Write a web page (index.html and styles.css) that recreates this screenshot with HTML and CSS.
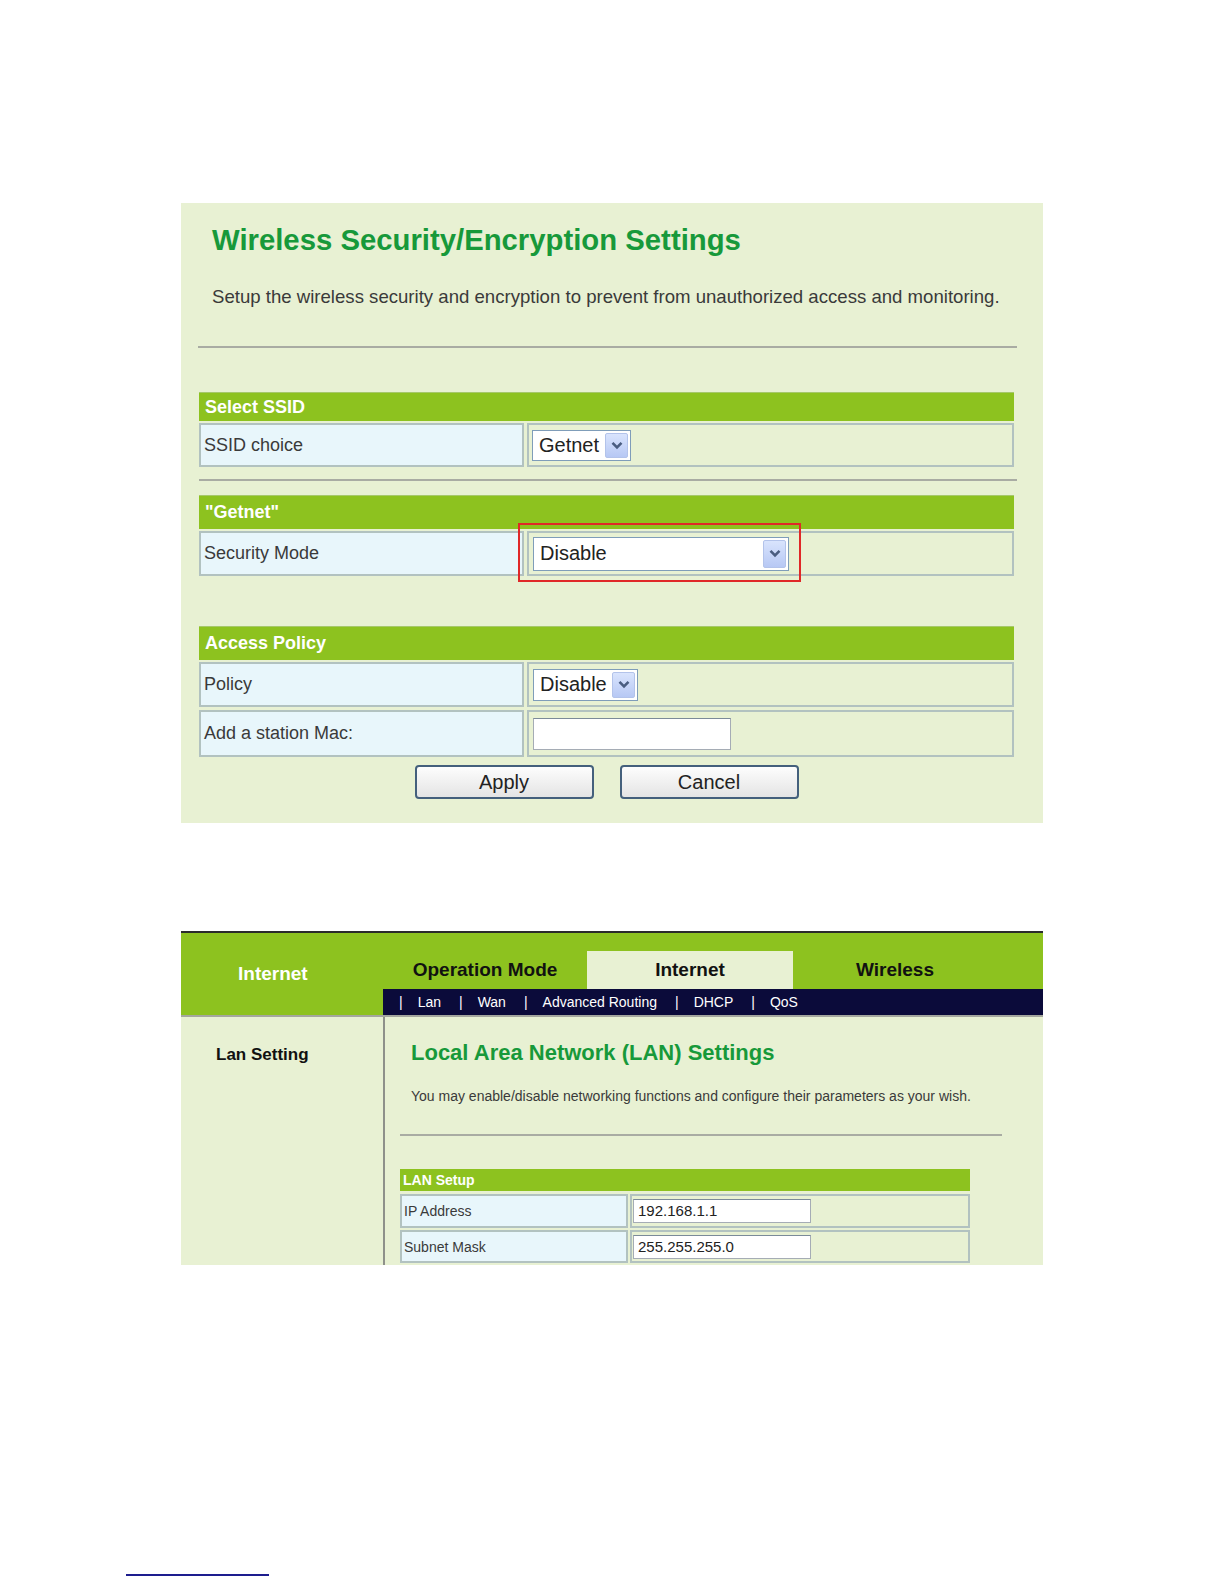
FILE: index.html
```html
<!DOCTYPE html>
<html lang="en">
<head>
  <meta charset="UTF-8">
  <title>Wireless Security / LAN Settings</title>
  <link rel="stylesheet" href="styles.css">
</head>
<body>

<div class="page">

  <!-- screenshot 1: wireless security -->
  <div class="shot shot-security">
    <h1 class="sec-title">Wireless Security/Encryption Settings</h1>
    <p class="sec-intro">Setup the wireless security and encryption to prevent from unauthorized access and monitoring.</p>
    <div class="rule rule-top"></div>

    <div class="block block-ssid">
      <div class="block-head">Select SSID</div>
      <div class="block-row">
        <div class="cell-label">SSID choice</div>
        <div class="cell-value">
          <div class="select select-ssid">
            <span class="select-text">Getnet</span>
            <span class="select-arrow"><svg width="12" height="9" viewBox="0 0 12 9"><path d="M1.5 1.8 L6 6.3 L10.5 1.8" fill="none" stroke="#4a5d80" stroke-width="2.6"/></svg></span>
          </div>
        </div>
      </div>
    </div>

    <div class="rule rule-mid"></div>

    <div class="block block-getnet">
      <div class="block-head">"Getnet"</div>
      <div class="block-row row-tall">
        <div class="cell-label">Security Mode</div>
        <div class="cell-value">
          <div class="select select-mode">
            <span class="select-text">Disable</span>
            <span class="select-arrow"><svg width="12" height="9" viewBox="0 0 12 9"><path d="M1.5 1.8 L6 6.3 L10.5 1.8" fill="none" stroke="#4a5d80" stroke-width="2.6"/></svg></span>
          </div>
        </div>
        <div class="mark-box"></div>
      </div>
    </div>

    <div class="block block-policy">
      <div class="block-head">Access Policy</div>
      <div class="block-row row-tall">
        <div class="cell-label">Policy</div>
        <div class="cell-value">
          <div class="select select-policy">
            <span class="select-text">Disable</span>
            <span class="select-arrow"><svg width="12" height="9" viewBox="0 0 12 9"><path d="M1.5 1.8 L6 6.3 L10.5 1.8" fill="none" stroke="#4a5d80" stroke-width="2.6"/></svg></span>
          </div>
        </div>
      </div>
      <div class="block-row row-mac">
        <div class="cell-label">Add a station Mac:</div>
        <div class="cell-value">
          <div class="text-input input-mac"></div>
        </div>
      </div>
      <div class="buttons">
        <div class="btn">Apply</div>
        <div class="btn">Cancel</div>
      </div>
    </div>
  </div>

  <!-- screenshot 2: LAN settings -->
  <div class="shot shot-lan">
    <div class="lan-head">
      <div class="lan-head-left">Internet</div>
      <div class="lan-head-right">
        <div class="tabs">
          <div class="tab tab-op">Operation Mode</div>
          <div class="tab tab-active">Internet</div>
          <div class="tab tab-wl">Wireless</div>
        </div>
        <div class="subnav">
          <span class="sub-item">Lan</span>
          <span class="sub-item">Wan</span>
          <span class="sub-item">Advanced Routing</span>
          <span class="sub-item">DHCP</span>
          <span class="sub-item">QoS</span>
        </div>
      </div>
    </div>
    <div class="lan-body">
      <div class="lan-side">Lan Setting</div>
      <div class="lan-main">
        <h2 class="lan-title">Local Area Network (LAN) Settings</h2>
        <p class="lan-intro">You may enable/disable networking functions and configure their parameters as your wish.</p>
        <div class="rule rule-lan"></div>
        <div class="lan-table">
          <div class="lan-table-head">LAN Setup</div>
          <div class="lan-row">
            <div class="lan-label">IP Address</div>
            <div class="lan-value"><div class="text-input lan-input">192.168.1.1</div></div>
          </div>
          <div class="lan-row">
            <div class="lan-label">Subnet Mask</div>
            <div class="lan-value"><div class="text-input lan-input">255.255.255.0</div></div>
          </div>
          <div class="lan-row">
            <div class="lan-label"></div>
            <div class="lan-value"></div>
          </div>
        </div>
      </div>
    </div>
  </div>

  <div class="foot-rule"></div>
</div>

</body>
</html>
```

FILE: styles.css
```css
body {
  margin: 0;
  background-color: #fff;
  font-family: 'Liberation Sans', Arial, sans-serif;
  color: #333;
}

.page {
  padding-top: 203px;
  height: 1584px;
  box-sizing: border-box;
}

.shot {
  width: 862px;
  margin-left: 181px;
  background-color: #e8f1d3;
  box-sizing: border-box;
}

/* ---------- wireless security ---------- */

.shot-security {
  height: 620px;
  padding-top: 20px;
}

.sec-title {
  margin: 0 0 0 31px;
  font-size: 29.3px;
  line-height: 34px;
  font-weight: bold;
  color: #17993a;
}

.sec-intro {
  margin: 29px 0 0 31px;
  font-size: 18.6px;
  line-height: 22px;
  color: #3a3a3a;
}

.rule {
  height: 2px;
  background-color: #a9aca3;
}

.rule-top {
  margin: 38px 0 0 17px;
  width: 819px;
}

.rule-mid {
  margin: 12px 0 0 18px;
  width: 818px;
}

.block {
  width: 815px;
  margin-left: 18px;
}

.block-ssid { margin-top: 44px; }
.block-getnet { margin-top: 14px; }
.block-policy { margin-top: 50px; }

.block-head {
  background-color: #8dc21f;
  color: #fff;
  font-weight: bold;
  font-size: 18px;
  line-height: 33px;
  padding-left: 6px;
  border-top: 1px solid #a6c86a;
}

.block-ssid .block-head {
  line-height: 28px;
}

.block-row {
  position: relative;
  display: flex;
  gap: 3px;
  height: 44px;
  margin-top: 2px;
}

.row-tall { height: 45px; }
.row-mac { height: 47px; margin-top: 3px; }

.cell-label,
.cell-value {
  border: 2px solid #b2c2c0;
  box-sizing: border-box;
  display: flex;
  align-items: center;
}

.cell-label {
  width: 325px;
  padding-left: 3px;
  background-color: #e8f6fb;
  font-size: 18px;
  color: #3a3a3a;
}

.cell-value {
  flex: 1;
  padding-left: 3px;
}

.select {
  display: flex;
  align-items: center;
  background-color: #fff;
  border: 1px solid #7f9db9;
  box-sizing: border-box;
  padding: 0 2px 0 6px;
  font-size: 20px;
  color: #222;
}

.select-arrow {
  margin-left: auto;
  width: 23px;
  align-self: stretch;
  margin-top: 2px;
  margin-bottom: 2px;
  display: flex;
  align-items: center;
  justify-content: center;
  background: linear-gradient(#d9e4fd, #b7c8f4);
  border: 1px solid #b3c3ea;
  border-radius: 2px;
  box-sizing: border-box;
}

.select-ssid { width: 99px; height: 31px; }
.select-mode { width: 256px; height: 34px; margin-left: 1px; }
.select-policy { width: 105px; height: 32px; margin-left: 1px; }

.mark-box {
  position: absolute;
  left: 319px;
  top: -8px;
  width: 283px;
  height: 59px;
  border: 2px solid #e02828;
  box-sizing: border-box;
}

.text-input {
  background-color: #fff;
  border: 1px solid #a5acb5;
  border-top-color: #7b8a99;
  box-sizing: border-box;
}

.input-mac {
  width: 198px;
  height: 32px;
  margin-left: 1px;
}

.buttons {
  display: flex;
  justify-content: center;
  gap: 26px;
  margin-top: 8px;
}

.btn {
  width: 179px;
  height: 34px;
  box-sizing: border-box;
  border: 2px solid #44607c;
  border-radius: 4px;
  background: linear-gradient(#fdfdfd, #e4e4e4);
  text-align: center;
  font-size: 20px;
  line-height: 30px;
  color: #222;
}

/* ---------- LAN settings ---------- */

.shot-lan {
  margin-top: 108px;
  height: 334px;
  border-top: 2px solid #2b2b2b;
  overflow: hidden;
}

.lan-head {
  display: flex;
  height: 82px;
  background-color: #8dc21f;
}

.lan-head-left {
  width: 202px;
  padding-left: 57px;
  box-sizing: border-box;
  display: flex;
  align-items: center;
  color: #fff;
  font-weight: bold;
  font-size: 19px;
}

.lan-head-right {
  flex: 1;
  display: flex;
  flex-direction: column;
  justify-content: flex-end;
}

.tabs {
  display: flex;
  height: 38px;
}

.tab {
  width: 204px;
  display: flex;
  align-items: center;
  justify-content: center;
  font-weight: bold;
  font-size: 19px;
  color: #111;
}

.tab-active {
  width: 206px;
  background-color: #e8f1d3;
}

.subnav {
  height: 26px;
  background-color: #0b0b3a;
  display: flex;
  align-items: center;
  padding-left: 16px;
  color: #fff;
  font-size: 14px;
}

.sub-item {
  margin-right: 18px;
}

.sub-item::before {
  content: "|";
  margin-right: 15px;
}

.lan-body {
  display: flex;
  height: 250px;
  border-top: 2px solid #a4a79e;
}

.lan-side {
  width: 204px;
  border-right: 2px solid #8e918a;
  padding: 28px 0 0 35px;
  box-sizing: border-box;
  font-weight: bold;
  font-size: 17px;
  line-height: 20px;
  color: #111;
}

.lan-main {
  flex: 1;
  padding-top: 23px;
}

.lan-title {
  margin: 0 0 0 26px;
  font-size: 22px;
  line-height: 26px;
  font-weight: bold;
  color: #17993a;
}

.lan-intro {
  margin: 22px 0 0 26px;
  font-size: 14px;
  line-height: 17px;
  color: #3a3a3a;
}

.rule-lan {
  margin: 29px 0 0 15px;
  width: 602px;
}

.lan-table {
  width: 570px;
  margin: 33px 0 0 15px;
}

.lan-table-head {
  background-color: #8dc21f;
  color: #fff;
  font-weight: bold;
  font-size: 14px;
  line-height: 22px;
  padding-left: 3px;
}

.lan-row {
  display: flex;
  gap: 2px;
  height: 34px;
  margin-top: 2px;
}

.lan-row:nth-child(2) { margin-top: 3px; }
.lan-row:nth-child(3) { height: 33px; }

.lan-label,
.lan-value {
  border: 2px solid #b2c2c0;
  box-sizing: border-box;
  display: flex;
  align-items: center;
}

.lan-label {
  width: 228px;
  padding-left: 2px;
  background-color: #e8f6fb;
  font-size: 14px;
  color: #3a3a3a;
}

.lan-value {
  flex: 1;
  padding-left: 1px;
}

.lan-input {
  width: 178px;
  height: 24px;
  padding-left: 4px;
  font-size: 15px;
  line-height: 22px;
  color: #222;
}

.foot-rule {
  width: 143px;
  height: 2px;
  margin: 309px 0 0 126px;
  background-color: #1d1d8e;
}
```
